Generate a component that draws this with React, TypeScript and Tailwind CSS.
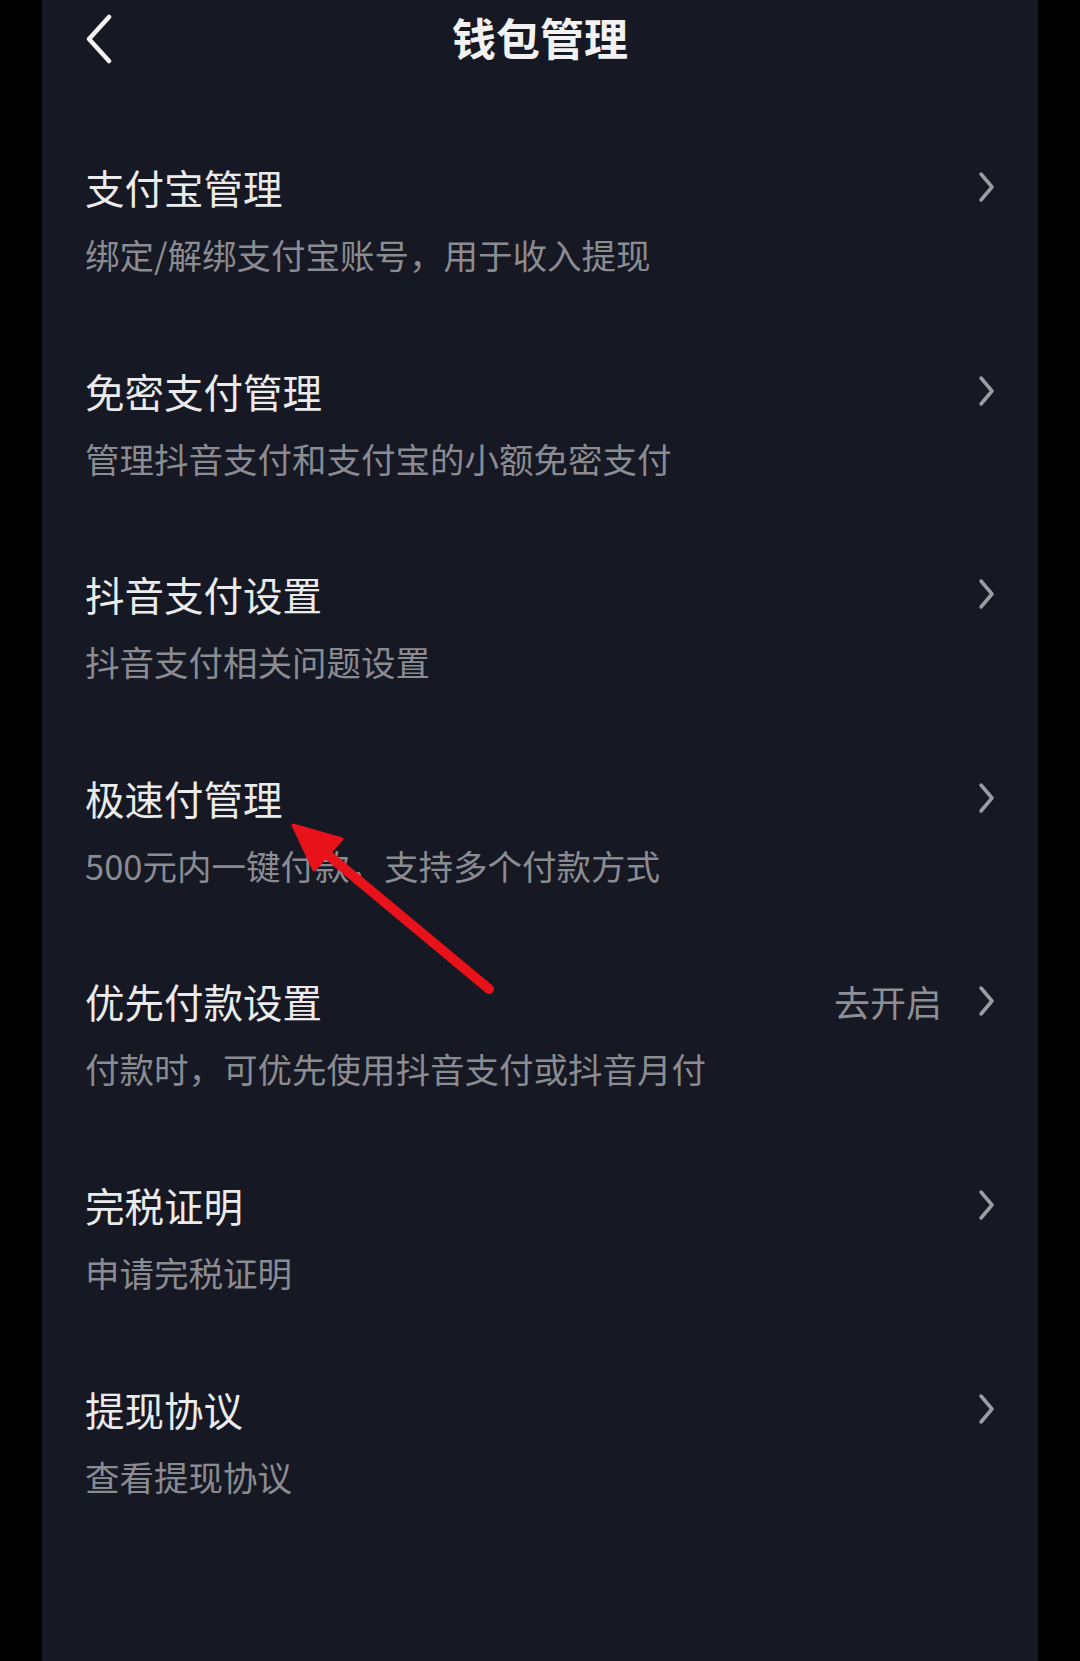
import React from "react";

type Item = { title: string; desc: string; extra?: string };

const items: Item[] = [
  { title: "支付宝管理", desc: "绑定/解绑支付宝账号，用于收入提现" },
  { title: "免密支付管理", desc: "管理抖音支付和支付宝的小额免密支付" },
  { title: "抖音支付设置", desc: "抖音支付相关问题设置" },
  { title: "极速付管理", desc: "500元内一键付款，支持多个付款方式" },
  { title: "优先付款设置", desc: "付款时，可优先使用抖音支付或抖音月付", extra: "去开启" },
  { title: "完税证明", desc: "申请完税证明" },
  { title: "提现协议", desc: "查看提现协议" },
];

const ChevronRight = () => (
  <svg width="17" height="32" viewBox="0 0 17 32" fill="none">
    <path d="M3 3 L14 16 L3 29" stroke="#9c9da2" strokeWidth="3.5" strokeLinecap="round" strokeLinejoin="round" />
  </svg>
);

const Row: React.FC<{ item: Item }> = ({ item }) => (
  <div className="flex flex-col">
    <div className="flex h-[48px] items-center justify-between">
      <span className="text-[39.5px] leading-[48px] text-[#ebebec]">{item.title}</span>
      <div className="flex items-center gap-[36px]">
        {item.extra && <span className="text-[36px] leading-[48px] text-[#8e8f95]">{item.extra}</span>}
        <ChevronRight />
      </div>
    </div>
    <span className="mt-[23px] text-[34.5px] leading-[40px] text-[#8b8c92]">{item.desc}</span>
  </div>
);

export default function App() {
  return (
    <div
      className="relative h-[1661px] w-[1080px] overflow-hidden bg-black"
      style={{ fontFamily: '"Noto Sans CJK SC", "Noto Sans", sans-serif' }}
    >
      <div className="mx-[42px] flex h-full flex-col bg-[#161823] pl-[43px] pr-[43px]">
        <header className="grid h-[74px] grid-cols-[1fr_auto_1fr] items-center">
          <svg width="28" height="50" viewBox="0 0 28 50" fill="none" className="translate-y-[2px]">
            <path d="M24 3 L4 25 L24 47" stroke="#f2f2f2" strokeWidth="4.5" strokeLinecap="round" strokeLinejoin="round" />
          </svg>
          <h1 className="text-[44px] font-bold leading-[74px] text-[#f2f2f2]">钱包管理</h1>
          <div />
        </header>

        <div className="mt-[89px] flex flex-col gap-[92.6px]">
          {items.map((it) => (
            <Row key={it.title} item={it} />
          ))}
        </div>
      </div>

      {/* red annotation arrow */}
      <svg className="pointer-events-none absolute inset-0" width="1080" height="1661" viewBox="0 0 1080 1661">
        <line x1="489" y1="989" x2="322" y2="850" stroke="#e8121a" strokeWidth="10" strokeLinecap="round" />
        <polygon points="293,825 342,839 314,870" fill="#e8121a" stroke="#e8121a" strokeWidth="3" strokeLinejoin="round" />
      </svg>
    </div>
  );
}
